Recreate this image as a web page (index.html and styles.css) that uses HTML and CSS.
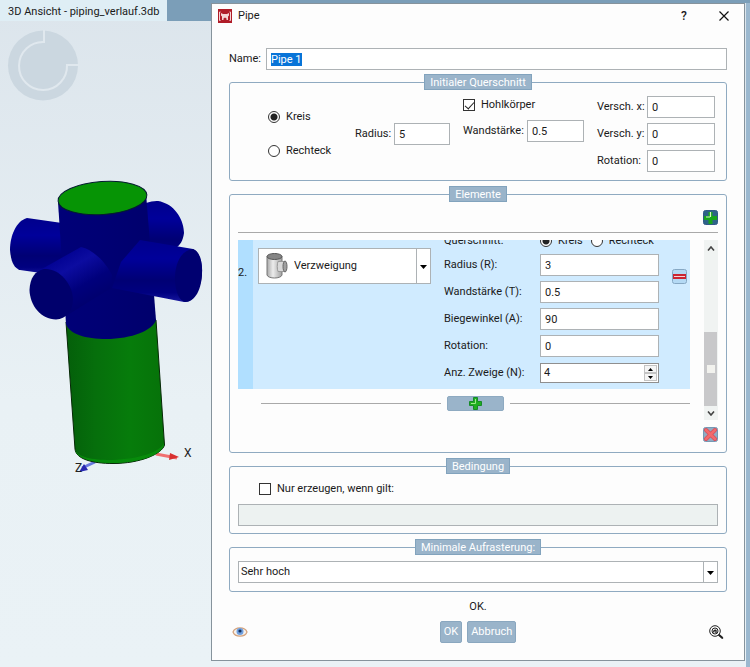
FILE: index.html
```html
<!DOCTYPE html>
<html lang="de">
<head>
<meta charset="utf-8">
<title>Pipe</title>
<link rel="stylesheet" href="styles.css">
</head>
<body>
<main class="workspace">
  <section class="viewer">
    <header class="tabs"><h1 class="tab">3D Ansicht - piping_verlauf.3db</h1></header>
    <svg class="scene" viewBox="0 21 211 646" preserveAspectRatio="xMinYMin meet" role="img" aria-label="3D-Modell">
      <defs>
        <linearGradient id="body" x1="0" x2="1"><stop offset="0" stop-color="#000078"/><stop offset=".4" stop-color="#000074"/><stop offset="1" stop-color="#00006c"/></linearGradient>
        <linearGradient id="green" x1="0" x2="1"><stop offset="0" stop-color="#045f0a"/><stop offset=".3" stop-color="#066f0c"/><stop offset=".65" stop-color="#067c0b"/><stop offset="1" stop-color="#067209"/></linearGradient>
        <linearGradient id="arm" x1="0" x2="0" y1="0" y2="1"><stop offset="0" stop-color="#00008c"/><stop offset=".3" stop-color="#00009a"/><stop offset=".65" stop-color="#000074"/><stop offset=".85" stop-color="#000080"/><stop offset="1" stop-color="#1818a0"/></linearGradient>
        <linearGradient id="front" x1=".25" y1=".1" x2=".7" y2=".85"><stop offset="0" stop-color="#000090"/><stop offset=".3" stop-color="#0c0ca0"/><stop offset=".65" stop-color="#00007c"/><stop offset="1" stop-color="#00006c"/></linearGradient>
      </defs>
      <circle cx="43" cy="65.500" r="35" fill="#cbd7e0"/>
      <path d="M44 30v12A24 24 0 1 0 67 65h12" fill="none" stroke="#e0e8ee" stroke-width="2"/>
      <path d="M156 454l21 4" stroke="#f07070" stroke-width="3"/>
      <path d="M170 453l9 4-10 3z" fill="#d83030"/>
      <path d="M95 462l-13 6" stroke="#6878e0" stroke-width="3"/>
      <path d="M79 472l5-8 4 6z" fill="#2828b0"/>
      <path d="M66 322L75 449C76 459 92 463.500 113 463.500C140 463.500 162 454 164.500 445L156 320Z" fill="url(#green)" stroke="#062806" stroke-width="1"/>
      <path d="M75 450C78 457 92 460 111 460C140 459 160 452 164 443C165 454 140 463 113 463C90 463 76 457 75 450Z" fill="#078b0b"/>
      <path d="M146 203C152 201 158 200 162 202C176 206 184 221 184 233C183 241 180 245 176 248L148 260Z" fill="url(#arm)"/>
      <path d="M62 223L27 218C16 221 10 236 10 250C11 262 14 268 20 270L62 276Z" fill="url(#arm)"/>
      <path d="M58 202L66 324C69 334 86 339 106 339C132 339 153 330 156 320L146 193Z" fill="url(#body)"/>
      <ellipse cx="102.500" cy="198" rx="44.500" ry="16.500" transform="rotate(-4 102.500 198)" fill="#069405" stroke="#041c30"/>
      <path d="M140 240L193 249C201 253 204 267 201 281C198 294 191 303 184 302L112 288L121 262Z" fill="url(#arm)"/>
      <path d="M193 249C181 250 175 264 175 278C175 293 180 301 185 302C195 302 202 289 202 272C202 259 199 251 193 249Z" fill="#000070"/>
      <path d="M40 270L81 247C94 250 106 263 112 275L111 288L66 316Z" fill="url(#front)"/>
      <path d="M44 269C59 268 72 283 73 299C73 311 66 319 56 319.500C41 319 30 306 29.500 290C30 278 35 271 44 269Z" fill="#00006c"/>
      <text x="184" y="457" class="axis">X</text>
      <text x="75" y="472" class="axis">Z</text>
    </svg>
  </section>

  <form class="dialog" onsubmit="return false">
    <header class="titlebar">
      <svg width="14" height="14" viewBox="0 0 14 14" aria-hidden="true"><path fill="#b01c28" d="M0 0h14v14H0z"/><path d="M2.500 3H1.500v8.500h1M11.500 3h1v8.500h-1" fill="none" stroke="#f4d4d4"/><path fill="#f4d4d4" d="M3 4l2 1h4l2-1v2.500l-1 1V11H8.500V9.500L7 8.500l-1.500 1V11H4V7.500l-1-1z"/></svg>
      <h2>Pipe</h2>
      <button type="button" class="bare help" aria-label="Hilfe">?</button>
      <button type="button" class="bare" aria-label="Schließen"><svg width="10" height="10" viewBox="0 0 10 10"><path d="M.5.5l9 9M9.500.5l-9 9" stroke="#111" stroke-width="1.200"/></svg></button>
    </header>

    <div class="name-row"><label for="name">Name:</label><input id="name" type="text" value="Pipe 1"></div>

    <fieldset>
      <legend>Initialer Querschnitt</legend>
      <div class="section-grid">
        <div class="shapes">
          <label><input type="radio" name="shape" checked>Kreis</label>
          <label><input type="radio" name="shape">Rechteck</label>
        </div>
        <div class="pair radius"><label for="radius">Radius:</label><input id="radius" type="text" value="5"></div>
        <div class="hollow">
          <label><input type="checkbox" checked>Hohlkörper</label>
          <div class="pair"><label for="wall">Wandstärke:</label><input id="wall" type="text" value="0.5"></div>
        </div>
        <div class="offsets">
          <label for="ox">Versch. x:</label><input id="ox" type="text" value="0">
          <label for="oy">Versch. y:</label><input id="oy" type="text" value="0">
          <label for="rot">Rotation:</label><input id="rot" type="text" value="0">
        </div>
      </div>
    </fieldset>

    <fieldset>
      <legend>Elemente</legend>
      <div class="elements">
        <div class="elements-head">
          <button type="button" class="bare" aria-label="Element am Anfang einfügen"><svg width="15" height="15" viewBox="0 0 15 15"><rect x=".5" y=".5" width="14" height="14" rx="2" fill="#2e6388" stroke="#315b86"/><path d="M5.500 2h4v4H14v4H9.500v4h-4v-4H1V6h4.500z" fill="#18a51c"/><path d="M7.500 2v5M3 7h4" stroke="#d8f4c0" stroke-width="1.200"/></svg></button>
        </div>
        <div class="elements-body">
          <div class="viewport">
            <div class="item">
              <span class="index">2.</span>
              <div class="select kind">
                <svg class="pipe" width="22" height="26" viewBox="0 0 22 26" aria-hidden="true"><defs><linearGradient id="metal"><stop offset="0" stop-color="#a8a8a8"/><stop offset=".4" stop-color="#ececec"/><stop offset="1" stop-color="#a0a0a0"/></linearGradient></defs><path d="M1 3.500v18.500C2 26 15 26 16 22V3.500z" fill="url(#metal)" stroke="#777"/><ellipse cx="8.500" cy="3.500" rx="7.500" ry="3" fill="#858585" stroke="#555"/><path d="M12 8.500h7v10h-7C11 16 11 11 12 8.500z" fill="#d8d8d8" stroke="#999"/><ellipse cx="19" cy="13.500" rx="2" ry="5.500" fill="#a0a0a0" stroke="#666"/></svg>
                <select aria-label="Elementtyp"><option>Verzweigung</option></select>
                <svg class="arrow" width="7" height="4" viewBox="0 0 7 4" aria-hidden="true"><path d="M0 0h7L3.500 4z"/></svg>
              </div>
              <div class="params">
                <span class="choice">Querschnitt:</span>
                <div class="choice"><label><input type="radio" name="cross" checked>Kreis</label><label><input type="radio" name="cross">Rechteck</label></div>
                <label for="pr">Radius (R):</label><input id="pr" type="text" value="3">
                <label for="pt">Wandstärke (T):</label><input id="pt" type="text" value="0.5">
                <label for="pa">Biegewinkel (A):</label><input id="pa" type="text" value="90">
                <label for="po">Rotation:</label><input id="po" type="text" value="0">
                <label for="pn">Anz. Zweige (N):</label>
                <div class="spin"><input id="pn" type="number" value="4"><div class="steps"><button type="button" aria-label="Mehr"><svg width="5" height="3" viewBox="0 0 5 3"><path d="M0 3h5L2.500 0z"/></svg></button><button type="button" aria-label="Weniger"><svg width="5" height="3" viewBox="0 0 5 3"><path d="M0 0h5L2.500 3z"/></svg></button></div></div>
              </div>
              <button type="button" class="bare remove" aria-label="Element entfernen"><svg width="15" height="15" viewBox="0 0 15 15"><rect x=".5" y=".5" width="14" height="14" rx="2" fill="#b4d9f4" stroke="#86a8c4"/><path fill="#cb2532" d="M1 5h13v5H1z"/><path d="M2 7.500h11" stroke="#f4d5d8"/></svg></button>
            </div>
            <div class="append">
              <button type="button" aria-label="Element hinzufügen"><svg width="13" height="13" viewBox="0 0 13 13"><path d="M4.500.5h4v4h4v4h-4v4h-4v-4h-4v-4h4z" fill="#1fae20" stroke="#168a28"/><path d="M6.500 2v4.500H2" fill="none" stroke="#9be88a"/></svg></button>
            </div>
          </div>
          <div class="scrollbar" aria-hidden="true">
            <svg width="8" height="5" viewBox="0 0 8 5"><path d="M1 4.500l3-3.500 3 3.500" fill="none" stroke="#444" stroke-width="1.600"/></svg>
            <div class="track"><div class="thumb"></div></div>
            <svg width="8" height="5" viewBox="0 0 8 5"><path d="M1 .5L4 4 7 .5" fill="none" stroke="#444" stroke-width="1.600"/></svg>
          </div>
        </div>
        <div class="elements-foot">
          <button type="button" class="bare" aria-label="Alle löschen"><svg width="15" height="15" viewBox="0 0 15 15"><rect x=".5" y=".5" width="14" height="14" rx="2" fill="#90abc2" stroke="#7798b4"/><path d="M3 3l9 9M12 3l-9 9" stroke="#d94b58" stroke-width="4" stroke-linecap="round"/><path d="M3 3l9 9M12 3l-9 9" stroke="#f26a6c" stroke-width="2.500" stroke-linecap="round"/></svg></button>
        </div>
      </div>
    </fieldset>

    <fieldset>
      <legend>Bedingung</legend>
      <div class="condition">
        <label><input type="checkbox">Nur erzeugen, wenn gilt:</label>
        <input type="text" aria-label="Bedingung" disabled>
      </div>
    </fieldset>

    <fieldset>
      <legend>Minimale Aufrasterung:</legend>
      <div class="select quality">
        <select aria-label="Minimale Aufrasterung"><option>Sehr hoch</option></select>
        <svg class="arrow" width="7" height="4" viewBox="0 0 7 4" aria-hidden="true"><path d="M0 0h7L3.500 4z"/></svg>
      </div>
    </fieldset>

    <p class="status">OK.</p>
    <footer class="footer">
      <button type="button" class="bare" aria-label="Vorschau"><svg width="16" height="12" viewBox="0 0 16 12"><path d="M1 6C3 .5 13 .5 15 6 13 11.500 3 11.500 1 6z" fill="#f5f1ec" stroke="#d3a17b" stroke-width="1.200"/><circle cx="8" cy="5.500" r="3.500" fill="#6f9fdf"/><circle cx="8" cy="5" r="1.600" fill="#12305e"/></svg></button>
      <div class="actions"><button type="submit">OK</button><button type="button">Abbruch</button></div>
      <button type="button" class="bare" aria-label="Suchen"><svg width="15" height="14" viewBox="0 0 15 14"><circle cx="6" cy="6" r="5.300" fill="none" stroke="#222"/><circle cx="6" cy="6" r="3" fill="none" stroke="#222"/><path d="M5 7.500c-1-2 2-3 2-2v2.500M10 10l4 3.500" fill="none" stroke="#222" stroke-width="1.400"/><path d="M9.500 9.500l4 3.500" stroke="#222" stroke-width="2"/></svg></button>
    </footer>
  </form>
</main>
<script src="script.js"></script>
</body>
</html>
```
FILE: styles.css
```css
* { box-sizing: border-box; }

body {
  margin: 0;
  font: 11px/16px Roboto, "Open Sans", sans-serif;
  color: #1a1a1a;
}

h1, h2, p { margin: 0; font-size: 11px; font-weight: 400; }
svg { display: block; flex: none; }
input, select, button { font: inherit; color: inherit; }

.workspace {
  display: grid;
  grid-template-columns: 211px minmax(0, 1fr);
  min-height: 100vh;
  padding-right: 5px;
  border-top: 3px solid #7b9eb8;
  background: linear-gradient(90deg, transparent calc(100% - 4px), #9bb8cf 0), linear-gradient(#dce5ec, #e9f1f5 60%, #eaf2f6);
}

.viewer { margin-top: -3px; }
.tabs { display: flex; height: 21px; background: #7b9eb8; }
.tab { padding: 4px 8px 0; background: #dfeef5; }
.scene { width: 100%; }
.axis { font-size: 12px; fill: #222; }

.dialog {
  align-self: start;
  padding: 0 17px 17px;
  border: 1px solid #86939c;
  background: #fdfdfd;
}

.titlebar {
  display: flex;
  align-items: center;
  height: 24px;
  margin: 0 0 20px -11px;
  gap: 6px;
}
.titlebar h2 { flex: 1; }
.titlebar .bare { width: 10px; margin-right: -2px; }
.titlebar .help { margin-right: 24px; font-size: 12px; font-weight: 500; }

.bare {
  display: flex;
  align-items: center;
  justify-content: center;
  padding: 0;
  border: 0;
  background: none;
}

input[type="text"], input[type="number"] {
  width: 100%;
  min-width: 0;
  height: 22px;
  padding: 0 4px;
  border: 1px solid #adb2b5;
  border-radius: 0;
  background: #fff;
  outline: none;
}
input::selection { background: #0874d8; color: #fff; }
input:disabled { background: #edf2f1; }

input[type="radio"], input[type="checkbox"] {
  appearance: none;
  flex: none;
  width: 12px;
  height: 12px;
  margin: 0;
  border: 1px solid #333;
  background: #fff;
}
input[type="radio"] { border-radius: 50%; }
input[type="radio"]:checked { background: radial-gradient(circle, #222 3px, #fff 4px); }
input[type="checkbox"]:checked::after {
  content: "";
  display: block;
  width: 8px;
  height: 4px;
  margin: 2px 1px;
  border: solid #222;
  border-width: 0 0 1px 1px;
  transform: rotate(-48deg);
}
label { line-height: 18px; }
label:has(> input) { display: flex; align-items: center; gap: 6px; line-height: 16px; }

.name-row { display: grid; grid-template-columns: 37px 1fr; align-items: center; margin-bottom: 4px; }

fieldset {
  min-width: 0;
  margin: 0 0 5px;
  padding: 0;
  border: 1px solid #8faac1;
  border-radius: 3px;
}
legend {
  height: 16px;
  margin: 0 auto;
  padding: 0 5px;
  border: 1px solid #82a3bd;
  background: #9ab4ca;
  color: #fff;
  line-height: 16px;
}

.section-grid {
  display: grid;
  grid-template-columns: 87fr 108fr 134fr 118fr;
  padding: 6px 11px 8px 38px;
}
.shapes { display: flex; flex-direction: column; justify-content: center; gap: 18px; }
.pair { display: grid; grid-template-columns: 39px 56px; align-items: center; }
.hollow { display: flex; flex-direction: column; gap: 7px; padding-top: 1px; }
.hollow .pair { grid-template-columns: 64px 57px; }
.offsets { display: grid; grid-template-columns: 50px 1fr; gap: 5px 0; align-items: center; }

.elements { padding: 8px 8px 10px; }
.elements-head { display: flex; justify-content: flex-end; padding-bottom: 7px; border-bottom: 1px solid #a9a9a9; }
.elements-body { display: flex; gap: 14px; height: 180px; margin: 7px 0; }
.elements-foot { display: flex; justify-content: flex-end; }

.viewport {
  display: flex;
  flex: 1;
  flex-direction: column;
  justify-content: flex-end;
  overflow: hidden;
  padding-bottom: 9px;
}
.item {
  display: flex;
  flex: none;
  align-items: flex-start;
  height: 165px;
  background: linear-gradient(90deg, #b0dfff 15px, #d0ebff 0);
}
.index { width: 20px; padding-top: 41px; }

.select { position: relative; }
.select select {
  appearance: none;
  width: 100%;
  border: 1px solid #adb2b5;
  border-radius: 0;
  background: linear-gradient(90deg, transparent calc(100% - 14px), #adb2b5 calc(100% - 14px), #adb2b5 calc(100% - 13px), transparent calc(100% - 13px)), #fff;
}
.select .arrow { position: absolute; top: 50%; right: 4px; margin-top: -1px; pointer-events: none; }
.kind { width: 173px; margin: 24px 13px 0 0; }
.kind select { height: 36px; padding: 0 16px 0 35px; }
.pipe { position: absolute; top: 5px; left: 8px; }

.params {
  display: grid;
  flex: 1;
  grid-template-columns: 96px 1fr;
  grid-auto-rows: 22px;
  gap: 5px 0;
  align-items: center;
  padding-top: 3px;
}
.choice { display: flex; align-self: end; gap: 8px; }
.spin {
  display: flex;
  height: 20px;
  padding: 1px;
  border: 1px solid #8f8f8f;
  background: #fff;
}
.spin input[type="number"] { height: 16px; padding: 0 2px; border: 0; appearance: textfield; }
.spin input::-webkit-inner-spin-button { display: none; }
.steps { display: grid; width: 13px; flex: none; }
.steps button { display: grid; place-content: center; min-height: 0; padding: 0; border: 1px solid #c4c4c4; background: #f5f5f5; }
.remove { margin: 45px 3px 0 13px; }

.append { display: flex; align-items: center; gap: 6px; margin: 7px 0 0 23px; }
.append::before, .append::after { content: ""; flex: 1; height: 1px; background: #a9a9a9; }
.append button {
  display: grid;
  place-content: center;
  width: 57px;
  height: 15px;
  padding: 0;
  border: 1px solid #8eaac1;
  border-radius: 2px;
  background: #9ab4ca;
}

.scrollbar {
  display: flex;
  flex-direction: column;
  align-items: center;
  width: 14px;
  padding: 6px 0 4px;
  background: #f0f3f2;
}
.track { display: flex; flex: 1; flex-direction: column; justify-content: flex-end; width: 100%; padding-bottom: 5px; }
.thumb { display: grid; height: 48%; margin-right: 1px; background: #c8c8ca; }
.thumb::after { content: ""; width: 8px; height: 8px; place-self: center; background: #f2f2ee; }

.condition { padding: 7px 8px; }
.condition label { margin: 0 0 7px 21px; }

.quality { margin: 6px 8px 8px; }
.quality select { height: 22px; padding: 0 18px 0 2px; }

.status { padding: 2px 0 6px; text-align: center; }
.footer { display: grid; grid-template-columns: 1fr auto 1fr; align-items: center; padding: 0 3px; }
.footer > .bare { justify-self: start; }
.footer > .bare:last-child { justify-self: end; }
.actions { display: flex; gap: 5px; }
.actions button {
  height: 22px;
  padding: 0 3px;
  border: 1px solid #8aa7bf;
  border-radius: 2px;
  background: #9ab4ca;
  color: #fff;
}
```
FILE: script.js
```js
const nameInput = document.getElementById("name");
nameInput.focus();
nameInput.select();
```
